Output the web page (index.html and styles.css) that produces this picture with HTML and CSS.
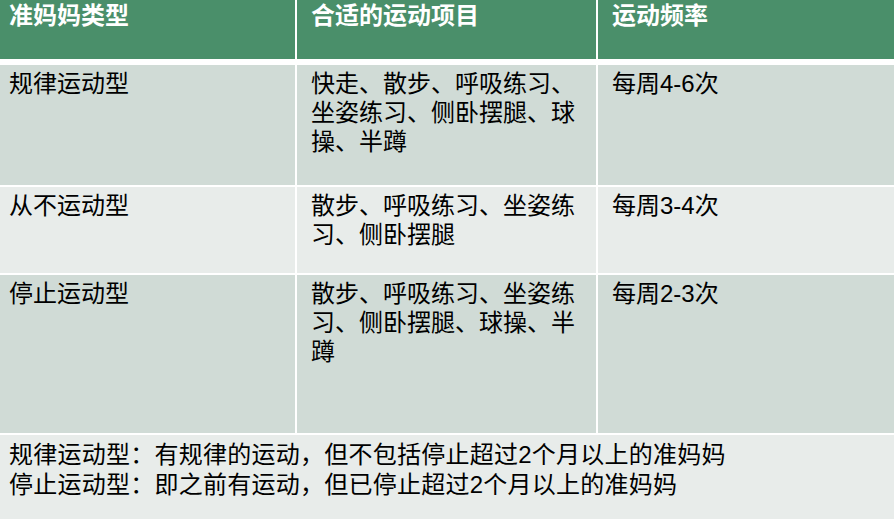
FILE: index.html
```html
<!DOCTYPE html>
<html lang="zh">
<head>
<meta charset="utf-8">
<link rel="stylesheet" href="styles.css">
</head>
<body>
<div class="table">
  <div class="cell head first">准妈妈类型</div>
  <div class="cell head">合适的运动项目</div>
  <div class="cell head">运动频率</div>

  <div class="cell odd first">规律运动型</div>
  <div class="cell odd">快走、散步、呼吸练习、坐姿练习、侧卧摆腿、球操、半蹲</div>
  <div class="cell odd">每周4-6次</div>

  <div class="cell even first">从不运动型</div>
  <div class="cell even">散步、呼吸练习、坐姿练习、侧卧摆腿</div>
  <div class="cell even">每周3-4次</div>

  <div class="cell odd first">停止运动型</div>
  <div class="cell odd">散步、呼吸练习、坐姿练习、侧卧摆腿、球操、半蹲</div>
  <div class="cell odd">每周2-3次</div>

  <div class="cell even note first">规律运动型：有规律的运动，但不包括停止超过2个月以上的准妈妈<br>停止运动型：即之前有运动，但已停止超过2个月以上的准妈妈</div>
</div>
</body>
</html>
```
FILE: styles.css
```css
html, body {
  margin: 0;
  padding: 0;
  background: #ffffff;
}
body {
  width: 894px;
  height: 519px;
  overflow: hidden;
  font-family: "Liberation Sans", "Noto Sans CJK SC", sans-serif;
  font-size: 24px;
  line-height: 29px;
  color: #000000;
}
.table {
  display: grid;
  grid-template-columns: 295px 299px 1fr;
  grid-template-rows: 63px 120px 86px 158px 84px;
  column-gap: 2px;
  row-gap: 2px;
}
.cell {
  padding: 4px 12px 0 14px;
  box-sizing: border-box;
}
.cell.first {
  padding-left: 9px;
}
.head {
  background: #4a8f6a;
  color: #ffffff;
  font-weight: bold;
  padding-top: 1px;
  margin-bottom: 4px;
}
.odd {
  background: #d0dbd6;
}
.even {
  background: #e8ecea;
}
.note {
  grid-column: 1 / 4;
  padding-top: 5px;
  line-height: 30px;
  letter-spacing: 0.25px;
}
```
